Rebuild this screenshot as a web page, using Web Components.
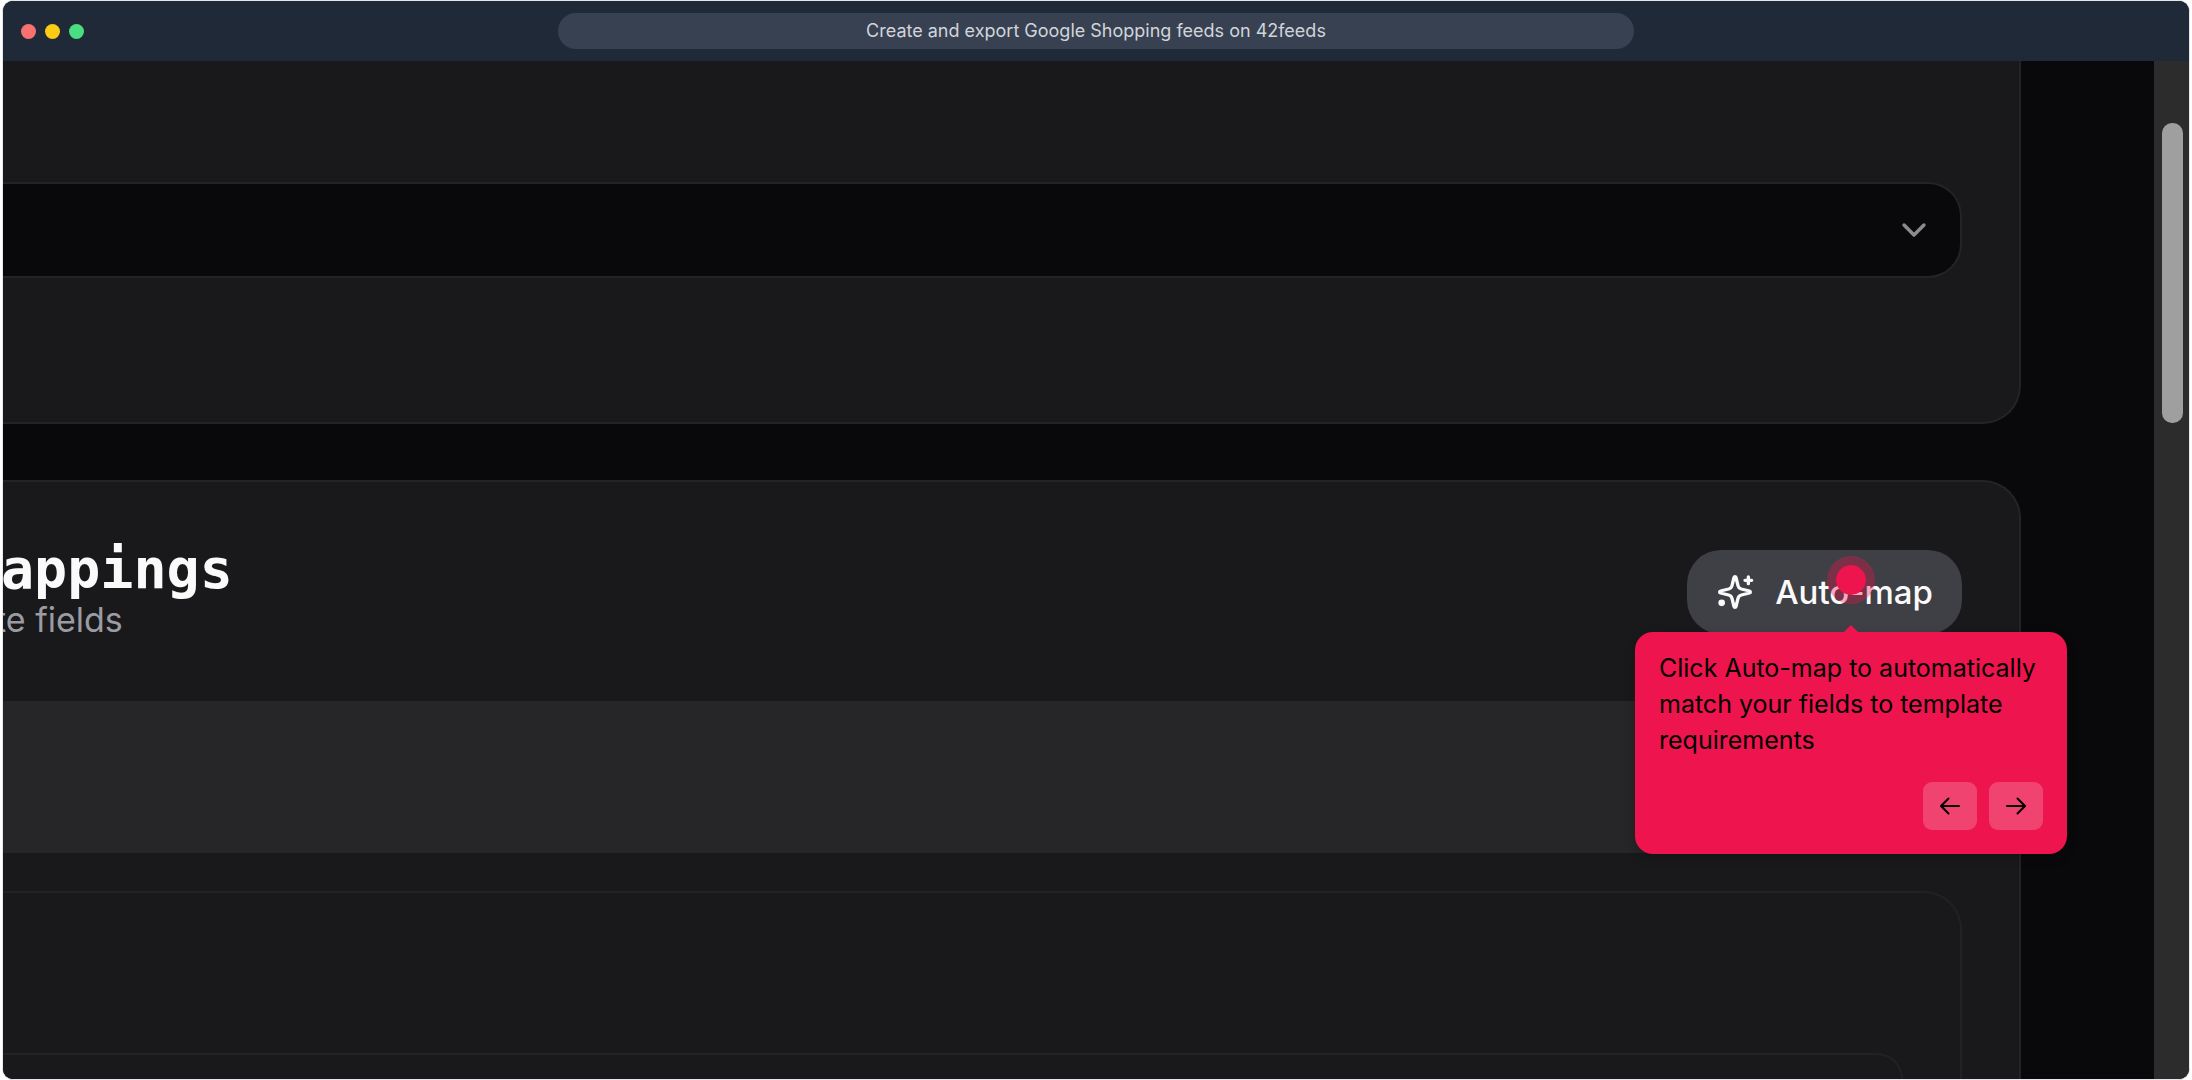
<!DOCTYPE html>
<html lang="en">
<head>
<meta charset="utf-8">
<meta name="viewport" content="width=device-width, initial-scale=1">
<title>Create and export Google Shopping feeds on 42feeds</title>
<style>
    body {
        margin: 0;
        background: #fff;
        font-family: Inter, "Liberation Sans", sans-serif;
    }
</style>
</head>
<body>
<browser-window>
    <span slot="title">Create and export Google Shopping feeds on 42feeds</span>
    <select-card></select-card>
    <mappings-card>
        <span slot="title">appings</span>
        <span slot="subtitle">te fields</span>
        <map-button slot="action">
            Auto-map
            <tour-step slot="tour">Click Auto-map to automatically match your fields to template requirements</tour-step>
        </map-button>
    </mappings-card>
</browser-window>

<script>
class BaseElement extends HTMLElement {
    constructor() {
        super()
        this.attachShadow({mode: 'open'})
    }

    connectedCallback() {
        const template = document.createElement('template')
        template.innerHTML = this.getStyles() + this.getTemplate()
        this.shadowRoot.replaceChildren(template.content.cloneNode(true))
    }
}

class BrowserWindow extends BaseElement {
    getTemplate() {
        return `
            <header>
                <div class="lights"><i></i><i></i><i></i></div>
                <div class="address"><slot name="title"></slot></div>
            </header>
            <main>
                <div class="page"><slot></slot></div>
                <div class="track"><div class="thumb"></div></div>
            </main>
        `
    }

    getStyles() {
        return `
            <style>
                :host {
                    display: flex;
                    flex-direction: column;
                    box-sizing: border-box;
                    height: 100vh;
                    margin: 0 2px;
                    border: 1px solid #e5e7eb;
                    border-radius: 11px;
                    overflow: hidden;
                    background: #09090b;
                }

                header {
                    display: grid;
                    grid-template-columns: 1fr minmax(0, 1076px) 1fr;
                    align-items: center;
                    flex: none;
                    height: 60px;
                    background: #202937;
                }

                .lights {
                    display: flex;
                    gap: 9px;
                    padding-left: 18px;
                }

                .lights i {
                    width: 15px;
                    height: 15px;
                    border-radius: 50%;
                    background: #f87171;
                }

                .lights i:nth-child(2) {
                    background: #facc15;
                }

                .lights i:nth-child(3) {
                    background: #4ade80;
                }

                .address {
                    height: 36px;
                    border-radius: 18px;
                    background: #384151;
                    color: #d1d5db;
                    font-size: 18px;
                    line-height: 36px;
                    text-align: center;
                    white-space: nowrap;
                }

                main {
                    display: flex;
                    flex: 1;
                    min-height: 0;
                }

                .page {
                    display: flex;
                    flex: 1;
                    flex-direction: column;
                    gap: 56px;
                    min-width: 0;
                    padding-right: 133px;
                }

                .track {
                    flex: none;
                    box-sizing: border-box;
                    width: 35px;
                    padding: 62px 6px 0 8px;
                    background: #2c2c2c;
                }

                .thumb {
                    height: 300px;
                    border-radius: 10px;
                    background: #9f9f9f;
                }
            </style>
        `
    }
}

class SelectCard extends BaseElement {
    getTemplate() {
        return `
            <div class="field">
                <select aria-label="Option"></select>
                <svg viewBox="0 0 24 24" fill="none" stroke="#8b8b8c" stroke-width="2.5" stroke-linecap="round" stroke-linejoin="round"><path d="M5 8.500l7 7 7-7"/></svg>
            </div>
        `
    }

    getStyles() {
        return `
            <style>
                :host {
                    display: block;
                    flex: none;
                    padding: 121px 57px 144px 0;
                    border: solid #242427;
                    border-width: 0 2px 2px 0;
                    border-radius: 0 0 38px 0;
                    background: #19191b;
                }

                .field {
                    display: grid;
                    align-items: center;
                }

                select, svg {
                    grid-area: 1 / 1;
                }

                select {
                    appearance: none;
                    box-sizing: border-box;
                    width: 100%;
                    height: 96px;
                    margin: 0;
                    border: solid #242427;
                    border-width: 2px 2px 2px 0;
                    border-radius: 0 34px 34px 0;
                    background: #09090b;
                }

                svg {
                    justify-self: end;
                    width: 34px;
                    height: 34px;
                    margin-right: 31px;
                    pointer-events: none;
                }
            </style>
        `
    }
}

class MappingsCard extends BaseElement {
    getTemplate() {
        return `
            <div class="head">
                <div>
                    <h2><slot name="title"></slot></h2>
                    <p><slot name="subtitle"></slot></p>
                </div>
                <slot name="action"></slot>
            </div>
            <div class="band"></div>
            <div class="group"><div class="group inner"></div></div>
        `
    }

    getStyles() {
        return `
            <style>
                :host {
                    display: flex;
                    flex: 1;
                    flex-direction: column;
                    box-sizing: border-box;
                    padding-right: 57px;
                    border: solid #242427;
                    border-width: 2px 2px 0 0;
                    border-radius: 0 38px 0 0;
                    background: #19191b;
                }

                .head {
                    display: flex;
                    align-items: flex-start;
                    justify-content: space-between;
                    box-sizing: border-box;
                    height: 219px;
                    padding-top: 60px;
                }

                h2 {
                    margin: 0 0 0 -2px;
                    color: #fafafa;
                    font: bold 55px/54px "DejaVu Sans Mono", "Liberation Mono", monospace;
                }

                p {
                    margin: 0 0 0 -8px;
                    color: #9b9ba3;
                    font-size: 34px;
                    line-height: 48px;
                }

                ::slotted(map-button) {
                    margin-top: 8px;
                }

                .band {
                    height: 152px;
                    background: #262628;
                }

                .group {
                    flex: 1;
                    box-sizing: border-box;
                    margin-top: 38px;
                    padding: 160px 57px 0 0;
                    border: solid #222225;
                    border-width: 2px 2px 0 0;
                    border-radius: 0 38px 0 0;
                }

                .inner {
                    height: 100%;
                    margin: 0;
                    padding: 0;
                }
            </style>
        `
    }
}

class MapButton extends BaseElement {
    getTemplate() {
        return `
            <button type="button">
                <svg viewBox="0 0 24 24" fill="none" stroke="currentColor" stroke-width="2" stroke-linecap="round" stroke-linejoin="round">
                    <path d="M12 2.800C12.300 2.800 12.500 3 12.600 3.300L13.800 8.200C14.100 9.300 14.700 9.900 15.800 10.200L20.700 11.400C21.400 11.600 21.400 12.400 20.700 12.600L15.800 13.800C14.700 14.100 14.100 14.700 13.800 15.800L12.600 20.700C12.400 21.400 11.600 21.400 11.400 20.700L10.200 15.800C9.900 14.700 9.300 14.100 8.200 13.800L3.300 12.600C2.600 12.400 2.600 11.600 3.300 11.400L8.200 10.200C9.300 9.900 9.900 9.300 10.200 8.200L11.400 3.300C11.500 3 11.700 2.800 12 2.800Z"/>
                    <path d="M20 3v4M18 5h4"/>
                    <circle cx="4" cy="18.500" r="1" fill="currentColor"/>
                </svg>
                <span><slot></slot></span>
            </button>
            <slot name="tour"></slot>
        `
    }

    getStyles() {
        return `
            <style>
                :host {
                    display: block;
                    position: relative;
                }

                button {
                    display: flex;
                    align-items: center;
                    gap: 20px;
                    height: 84px;
                    margin: 0;
                    padding: 0 29px 0 28px;
                    border: 0;
                    border-radius: 34px;
                    background: #3f3f46;
                    color: #fafafa;
                    font: 500 33px/40px Inter, "Liberation Sans", sans-serif;
                    white-space: nowrap;
                }

                svg {
                    width: 40px;
                    height: 40px;
                }
            </style>
        `
    }
}

class TourStep extends BaseElement {
    getTemplate() {
        return `
            <div class="dot"></div>
            <div class="bubble" role="dialog" aria-label="Tour step">
                <p><slot></slot></p>
                <nav>
                    <button type="button" aria-label="Previous">
                        <svg viewBox="0 0 24 24"><path d="M21 12H3.500M10.500 4.500L3 12l7.500 7.500"/></svg>
                    </button>
                    <button type="button" aria-label="Next">
                        <svg viewBox="0 0 24 24"><path d="M3 12h17.500M13.500 4.500L21 12l-7.500 7.500"/></svg>
                    </button>
                </nav>
            </div>
        `
    }

    getStyles() {
        return `
            <style>
                :host {
                    display: block;
                    position: absolute;
                    top: 6px;
                    right: -105px;
                    width: 432px;
                }

                .dot {
                    width: 30px;
                    height: 30px;
                    margin: 0 auto;
                    border: 9px solid rgba(238, 20, 77, .35);
                    border-radius: 50%;
                    background: #ee144d;
                    background-clip: padding-box;
                }

                .bubble {
                    position: relative;
                    box-sizing: border-box;
                    margin-top: 28px;
                    padding: 18px 24px 24px;
                    border-radius: 18px;
                    background: #ee144d;
                    box-shadow: 0 4px 12px rgba(0, 0, 0, .2);
                    color: #000;
                }

                .bubble::before {
                    content: "";
                    position: absolute;
                    bottom: 100%;
                    left: 50%;
                    margin-left: -7px;
                    border: solid transparent;
                    border-width: 0 7px 7px;
                    border-bottom-color: #ee144d;
                }

                p {
                    margin: 0;
                    font: 25px/36px Inter, "Liberation Sans", sans-serif;
                    white-space: normal;
                }

                nav {
                    display: flex;
                    justify-content: flex-end;
                    gap: 12px;
                    margin-top: 24px;
                }

                button {
                    display: grid;
                    place-items: center;
                    width: 54px;
                    height: 48px;
                    padding: 0;
                    border: 0;
                    border-radius: 9px;
                    background: rgba(255, 255, 255, .2);
                    color: #000;
                }

                svg {
                    width: 24px;
                    height: 24px;
                    fill: none;
                    stroke: currentColor;
                    stroke-width: 2;
                    stroke-linecap: round;
                    stroke-linejoin: round;
                }
            </style>
        `
    }
}

customElements.define('browser-window', BrowserWindow)
customElements.define('select-card', SelectCard)
customElements.define('mappings-card', MappingsCard)
customElements.define('map-button', MapButton)
customElements.define('tour-step', TourStep)
</script>
</body>
</html>
